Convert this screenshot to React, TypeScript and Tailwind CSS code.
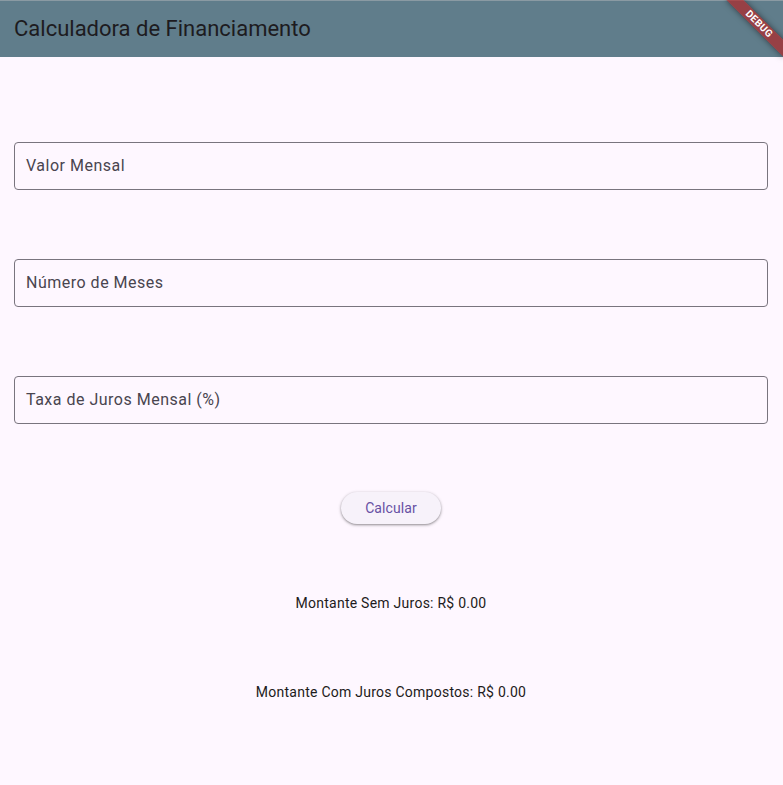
import React from "react";

const fields = ["Valor Mensal", "Número de Meses", "Taxa de Juros Mensal (%)"];

export default function App() {
  return (
    <div
      className="relative w-[783px] h-[785px] overflow-hidden bg-[#fef7ff] text-[#1d1b20]"
      style={{ fontFamily: "Roboto, 'Noto Sans', sans-serif" }}
    >
      {/* App bar */}
      <header className="h-[57px] bg-[#607d8b] border-t border-[#8a9aa3] flex items-center px-[14px]">
        <h1 className="text-[22px] leading-[28px] font-normal text-[#1d1b20]">Calculadora de Financiamento</h1>
      </header>

      <main className="pl-[14px] pr-[15px] pt-[85px] flex flex-col">
        {fields.map((label, i) => (
          <div
            key={label}
            className={`h-[48px] rounded-[4px] border border-[#79747e] flex items-center px-[11px] ${i > 0 ? "mt-[69px]" : ""}`}
          >
            <span className="text-[16px] tracking-[0.5px] text-[#49454f]">{label}</span>
          </div>
        ))}

        <div className="mt-[68px] flex justify-center">
          <button className="h-[32px] w-[100px] rounded-full bg-[#f7f2fa] text-[#6750a4] text-[14px] font-normal tracking-[0.1px] shadow-[0_1px_2px_rgba(0,0,0,0.3),0_1px_3px_1px_rgba(0,0,0,0.12)]">
            Calcular
          </button>
        </div>

        <p className="mt-[69px] text-center text-[14px] leading-[20px] tracking-[0.25px]">Montante Sem Juros: R$ 0.00</p>
        <p className="mt-[69px] text-center text-[14px] leading-[20px] tracking-[0.25px]">Montante Com Juros Compostos: R$ 0.00</p>
      </main>

      {/* Debug banner */}
      <div className="absolute top-[18px] right-[-16px] w-[80px] h-[12px] rotate-45 bg-[rgba(183,28,28,0.63)] shadow-[0_0_6px_rgba(0,0,0,0.5)] flex items-center justify-center">
        <span className="text-[10px] leading-[12px] font-bold text-white tracking-[0.3px]">DEBUG</span>
      </div>
    </div>
  );
}
